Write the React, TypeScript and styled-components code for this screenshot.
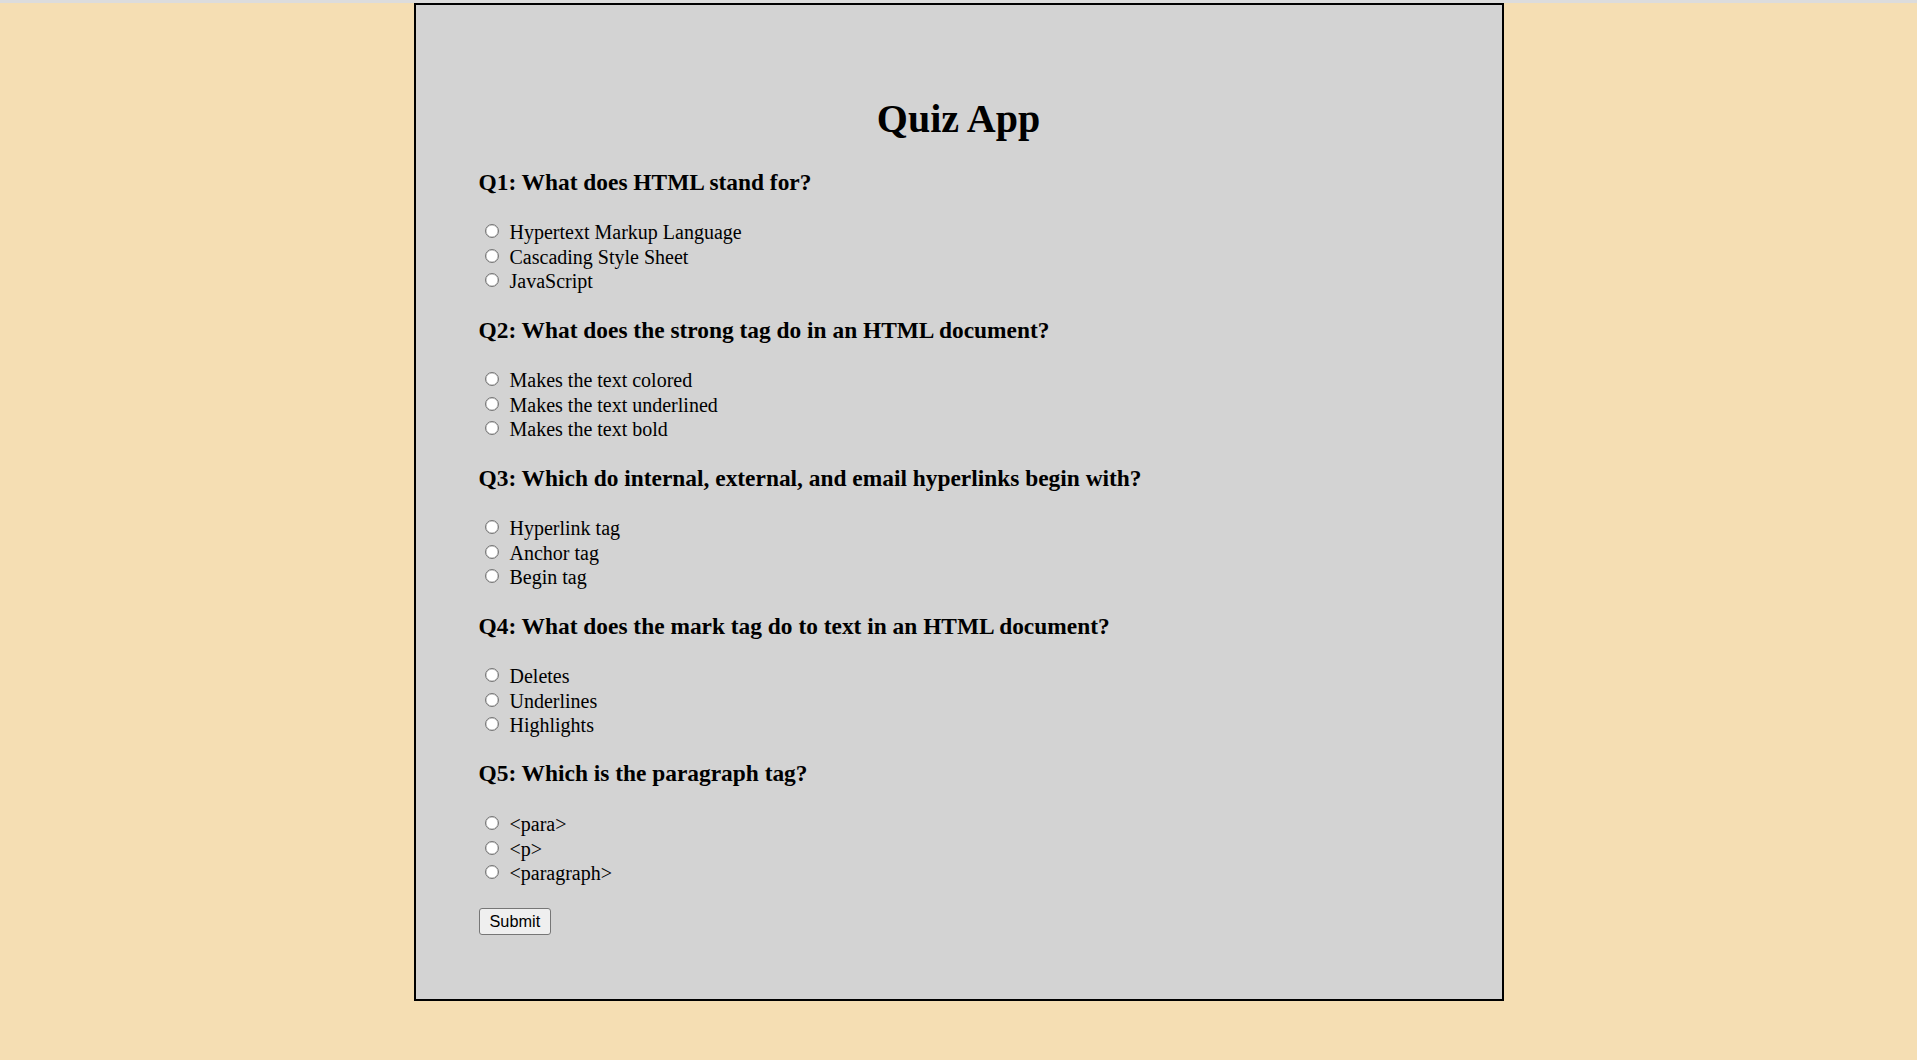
import styled, { createGlobalStyle } from 'styled-components'

const GlobalStyle = createGlobalStyle`
  html, body {
    margin: 0;
    padding: 0;
    background: #f5deb3;
  }
  body {
    font-family: "Liberation Serif", "Times New Roman", serif;
    color: #000;
  }
`

const questions = [
  {
    id: 'q1',
    text: 'Q1: What does HTML stand for?',
    options: ['Hypertext Markup Language', 'Cascading Style Sheet', 'JavaScript'],
  },
  {
    id: 'q2',
    text: 'Q2: What does the strong tag do in an HTML document?',
    options: ['Makes the text colored', 'Makes the text underlined', 'Makes the text bold'],
  },
  {
    id: 'q3',
    text: 'Q3: Which do internal, external, and email hyperlinks begin with?',
    options: ['Hyperlink tag', 'Anchor tag', 'Begin tag'],
  },
  {
    id: 'q4',
    text: 'Q4: What does the mark tag do to text in an HTML document?',
    options: ['Deletes', 'Underlines', 'Highlights'],
  },
  {
    id: 'q5',
    text: 'Q5: Which is the paragraph tag?',
    options: ['<para>', '<p>', '<paragraph>'],
  },
]

const TopStrip = styled.div`
  height: 3px;
  background: #dcdcdc;
`

const Panel = styled.form`
  box-sizing: border-box;
  width: 1090px;
  margin: 0 auto;
  padding: 91px 63px 64px;
  background: #d3d3d3;
  border: 2px solid #000;
`

const Title = styled.h1`
  margin: 0 0 26.6px;
  font-size: 40px;
  line-height: 46px;
  font-weight: bold;
  text-align: center;
`

const QuestionBlock = styled.div`
  margin-bottom: 22.6px;
`

const QuestionHeading = styled.h3`
  margin: 0 0 24.6px;
  font-size: 23.4px;
  line-height: 27px;
  font-weight: bold;
`

const OptionRow = styled.label`
  display: block;
  height: 24.6px;
  font-size: 20px;
  line-height: 24.6px;
  white-space: nowrap;
`

const Radio = styled.input`
  appearance: none;
  box-sizing: border-box;
  display: inline-block;
  width: 14px;
  height: 14px;
  margin: 0 11px 1px 6px;
  vertical-align: baseline;
  border: 1px solid #767676;
  border-radius: 50%;
  background: #fff;
  box-shadow: inset 0 0 0 0.5px #b0b0b0;

  &:checked {
    border: 4px solid #0075ff;
  }
`

const SubmitButton = styled.button`
  box-sizing: border-box;
  height: 27px;
  padding: 0 10px;
  font-family: "Liberation Sans", Arial, sans-serif;
  font-size: 16.3px;
  color: #000;
  background: #efefef;
  border: 1px solid #767676;
  border-radius: 3px;
`

export default function App() {
  return <>
    <GlobalStyle />
    <TopStrip />
    <Panel onSubmit={e => e.preventDefault()}>
      <Title>Quiz App</Title>
      {questions.map(q => <QuestionBlock key={q.id}>
        <QuestionHeading>{q.text}</QuestionHeading>
        {q.options.map(opt => <OptionRow key={opt}>
          <Radio type='radio' name={q.id} value={opt} />
          {opt}
        </OptionRow>)}
      </QuestionBlock>)}
      <SubmitButton type='submit'>Submit</SubmitButton>
    </Panel>
  </>
}
